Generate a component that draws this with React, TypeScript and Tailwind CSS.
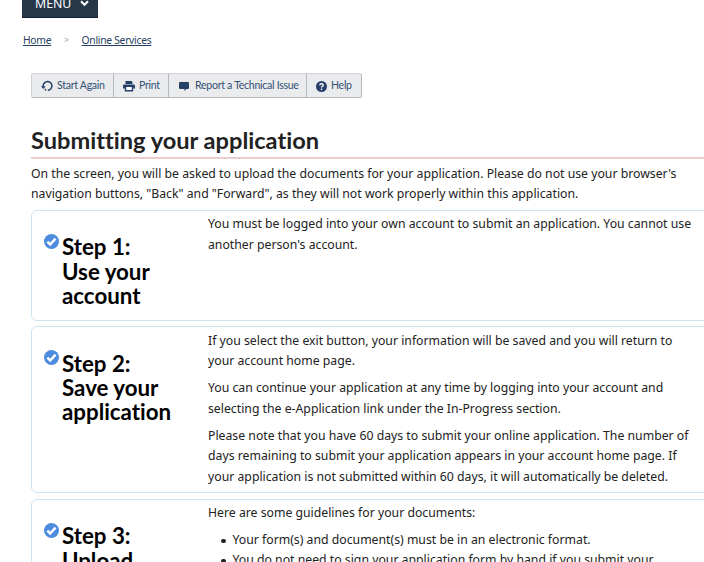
import type { ReactNode } from 'react';

function Lines({ lines }: { lines: string[] }) {
  return (
    <p className="mb-[7px] whitespace-nowrap">
      {lines.map((line) => (
        <span key={line} className="block">{line}</span>
      ))}
    </p>
  );
}

function Bullet({ children }: { children: ReactNode }) {
  return (
    <li className="flex items-center pl-[13px]">
      <span className="mt-[1px] mr-[7px] h-[4.5px] w-[4.5px] rounded-full bg-[#222]" />
      {children}
    </li>
  );
}

function CheckCircle() {
  return (
    <svg viewBox="0 0 16 16" className="mt-[23px] h-[15px] w-[15px] shrink-0">
      <circle cx="8" cy="8" r="8" fill="#4c8bdd" />
      <path d="M3.6 8.2l3 3 5.7-6.2" fill="none" stroke="#fff" strokeWidth="2.7" />
    </svg>
  );
}

function Step({ title, size, children }: { title: string[]; size: string; children: ReactNode }) {
  return (
    <section className={`flex w-[720px] shrink-0 rounded-[6px] border border-[#cde4f2] pl-[12px] ${size}`}>
      <CheckCircle />
      <h2 className="w-[149px] shrink-0 pt-[24.4px] pl-[3px] font-[Lato,sans-serif] text-[22.3px] leading-[24.3px] font-bold whitespace-nowrap text-black [font-variant-ligatures:none]">
        {title.map((t) => (
          <span key={t} className="block">{t}</span>
        ))}
      </h2>
      <div className="pt-[3.4px]">{children}</div>
    </section>
  );
}

function ToolButton({ icon, label, className }: { icon: ReactNode; label: string; className: string }) {
  return (
    <button className={`flex h-full shrink-0 items-center border-r border-[#b5b7ba] whitespace-nowrap ${className}`}>
      {icon}
      <span>{label}</span>
    </button>
  );
}

export default function App() {
  return (
    <div className="h-[562px] w-[704px] overflow-hidden bg-white font-['Noto_Sans',sans-serif] text-[12.26px] leading-[20.3px] text-[#222]">
      <div className="ml-[22px] flex h-[18px] w-[76px] items-end border-b border-[#101f30] bg-[#26374a] pl-[13px] text-white">
        <span className="h-[23px] text-[12.3px] leading-[20px]">MENU</span>
        <svg viewBox="0 0 10 8" className="mb-[10px] ml-[9px] h-[7px] w-[9px]">
          <path d="M1 1.5l4 4 4-4" fill="none" stroke="#fff" strokeWidth="2.3" />
        </svg>
      </div>
      <nav className="flex h-[55px] items-start pt-[11.5px] pl-[23px] text-[10.3px] leading-[20px] tracking-[-0.27px] text-[#284162]">
        <a className="underline">Home</a>
        <span className="mr-[13px] ml-[13px] text-[8px] text-[#999]">&gt;</span>
        <a className="underline">Online Services</a>
      </nav>
      <div className="ml-[31px] flex h-[25px] w-[331px] rounded-[2px] border border-r-0 border-[#cfd1d4] border-b-[#b5b7ba] bg-[#eaebed] font-[Lato,sans-serif] text-[10.6px] leading-[20px] tracking-[-0.3px] text-[#335075] [font-variant-ligatures:none]">
        <ToolButton
          className="w-[82px] gap-[4px] pb-[1px] pl-[9px]"
          label="Start Again"
          icon={
            <svg viewBox="0 0 12 12" className="mt-[2px] h-[12px] w-[12px]">
              <path d="M2.3 7.2A4.4 4.4 0 1 1 6.8 10.4" fill="none" stroke="#26406a" strokeWidth="1.5" />
              <path d="M0 6.3h4.7L2.4 9z" fill="#26406a" />
              <path d="M3.7 9.3l1.5.9" stroke="#26406a" strokeWidth="1.4" />
            </svg>
          }
        />
        <ToolButton
          className="w-[55px] gap-[4px] pb-[1px] pl-[9px]"
          label="Print"
          icon={
            <svg viewBox="0 0 12 12" className="mt-[2px] h-[12px] w-[12px]">
              <path d="M2.5 1h6l1 1v2h-7z" fill="#26406a" />
              <path d="M0 8.5V5.8Q0 4.5 1.4 4.5h9.2Q12 4.5 12 5.8v2.7h-1.8V7H1.8v1.5z" fill="#26406a" />
              <path d="M2.5 7v3.8h7V7" fill="#fff" stroke="#26406a" strokeWidth="1.4" />
            </svg>
          }
        />
        <ToolButton
          className="w-[138px] gap-[6px] pb-[1px] pl-[10px]"
          label="Report a Technical Issue"
          icon={
            <svg viewBox="0 0 10 10" className="mt-[1px] h-[10px] w-[10px]">
              <path d="M1 1h8q1 0 1 1v5q0 1-1 1H7.5L5.5 10V8H1Q0 8 0 7V2q0-1 1-1z" fill="#26406a" />
            </svg>
          }
        />
        <ToolButton
          className="w-[55px] gap-[4px] pb-[1px] pl-[9px]"
          label="Help"
          icon={
            <svg viewBox="0 0 12 12" className="mt-[2px] h-[11px] w-[11px]">
              <circle cx="6" cy="6" r="6" fill="#26406a" />
              <path d="M4 4.6Q4.2 3 6 3t1.9 1.5Q7.9 5.4 6.9 5.9 6 6.3 6 7.2M6 8.2v1.5" fill="none" stroke="#fff" strokeWidth="1.4" />
            </svg>
          }
        />
      </div>
      <main className="ml-[31px]">
        <h1 className="mt-[26px] h-[35px] border-b-2 border-[#eccdcf] font-[Lato,sans-serif] text-[23.6px] leading-[33px] font-bold whitespace-nowrap [font-variant-ligatures:none]">
          Submitting your application
        </h1>
        <div className="h-[51px] pt-[5px]">
          <Lines
            lines={[
              "On the screen, you will be asked to upload the documents for your application. Please do not use your browser's",
              'navigation buttons, "Back" and "Forward", as they will not work properly within this application.',
            ]}
          />
        </div>
        <Step size="mb-[5.4px] h-[111px]" title={['Step 1:', 'Use your', 'account']}>
          <Lines
            lines={[
              'You must be logged into your own account to submit an application. You cannot use',
              "another person's account.",
            ]}
          />
        </Step>
        <Step size="mb-[5.6px] h-[167px]" title={['Step 2:', 'Save your', 'application']}>
          <Lines
            lines={[
              'If you select the exit button, your information will be saved and you will return to',
              'your account home page.',
            ]}
          />
          <Lines
            lines={[
              'You can continue your application at any time by logging into your account and',
              'selecting the e-Application link under the In-Progress section.',
            ]}
          />
          <Lines
            lines={[
              'Please note that you have 60 days to submit your online application. The number of',
              'days remaining to submit your application appears in your account home page. If',
              'your application is not submitted within 60 days, it will automatically be deleted.',
            ]}
          />
        </Step>
        <Step size="h-[167px]" title={['Step 3:', 'Upload']}>
          <Lines lines={['Here are some guidelines for your documents:']} />
          <ul className="-mt-[0.5px] whitespace-nowrap">
            <Bullet>Your form(s) and document(s) must be in an electronic format.</Bullet>
            <Bullet>You do not need to sign your application form by hand if you submit your</Bullet>
          </ul>
        </Step>
      </main>
    </div>
  );
}
